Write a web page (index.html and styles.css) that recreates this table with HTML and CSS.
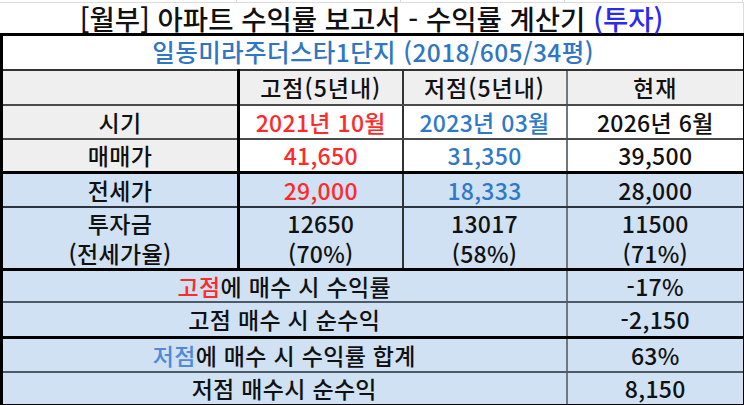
FILE: index.html
```html
<!DOCTYPE html>
<html lang="ko">
<head>
<meta charset="utf-8">
<title>수익률 계산기</title>
<link rel="stylesheet" href="styles.css">
</head>
<body>
<div class="sheet">
  <div class="strip">
    <div class="gc c1"></div><div class="gc c2"></div><div class="gc c3"></div><div class="gc c4"></div>
  </div>
  <div class="title">[월부] 아파트 수익률 보고서 - 수익률 계산기 <span class="t-blue">(투자)</span></div>
  <table class="report">
    <colgroup>
      <col class="w1"><col class="w2"><col class="w3"><col class="w4">
    </colgroup>
    <tr class="r-sub">
      <td colspan="4" class="sub">일동미라주더스타1단지 (2018/605/34평)</td>
    </tr>
    <tr class="r-head">
      <td class="grey vb"></td>
      <td class="grey v2 hd">고점(5년내)</td>
      <td class="grey v3 hd">저점(5년내)</td>
      <td class="grey hd">현재</td>
    </tr>
    <tr class="r-time">
      <td class="grey vb">시기</td>
      <td class="v2 red">2021년 10월</td>
      <td class="v3 blue">2023년 03월</td>
      <td>2026년 6월</td>
    </tr>
    <tr class="r-price">
      <td class="grey vb">매매가</td>
      <td class="v2 red">41,650</td>
      <td class="v3 blue">31,350</td>
      <td>39,500</td>
    </tr>
    <tr class="r-jeonse lb">
      <td class="vb">전세가</td>
      <td class="v2 red">29,000</td>
      <td class="v3 blue">18,333</td>
      <td>28,000</td>
    </tr>
    <tr class="r-invest lb">
      <td class="vb two">투자금<br>(전세가율)</td>
      <td class="v2 two">12650<br>(70%)</td>
      <td class="v3 two">13017<br>(58%)</td>
      <td class="two">11500<br>(71%)</td>
    </tr>
    <tr class="r-b1 lb">
      <td colspan="3" class="v3"><span class="red">고점</span>에 매수 시 수익률</td>
      <td>-17%</td>
    </tr>
    <tr class="r-b2 lb">
      <td colspan="3" class="v3">고점 매수 시 순수익</td>
      <td>-2,150</td>
    </tr>
    <tr class="r-b3 lb">
      <td colspan="3" class="v3"><span class="blue2">저점</span>에 매수 시 수익률 합계</td>
      <td>63%</td>
    </tr>
    <tr class="r-b4 lb">
      <td colspan="3" class="v3">저점 매수시 순수익</td>
      <td>8,150</td>
    </tr>
  </table>
</div>
</body>
</html>
```
FILE: styles.css
```css
* { box-sizing: border-box; }
html, body { margin: 0; padding: 0; background: #fff; }
body {
  font-family: "Noto Sans CJK KR", "Noto Sans", sans-serif;
  font-weight: 500;
  color: #111;
  width: 744px;
  height: 405px;
  overflow: hidden;
}
.sheet { width: 744px; }
.strip {
  display: flex;
  height: 3px;
  border-bottom: 1px solid #dcdcdc;
}
.gc { height: 3px; border-right: 1px solid #dcdcdc; }
.c1 { width: 237px; }
.c2 { width: 164px; }
.c3 { width: 164px; }
.c4 { width: 178px; }
.title {
  height: 30px;
  line-height: 30px;
  text-align: center;
  font-size: 27.5px;
  border-right: 1px solid #dcdcdc;
  white-space: nowrap;
}
.t-blue { color: #2b2bf0; }
.report {
  border-collapse: collapse;
  table-layout: fixed;
  width: 743px;
  border: 3px solid #000;
  font-size: 23px;
  letter-spacing: 0.3px;
}
.w1 { width: 237px; }
.w2 { width: 164px; }
.w3 { width: 164px; }
.w4 { width: 178px; }
.report td {
  padding: 0;
  text-align: center;
  vertical-align: middle;
  white-space: nowrap;
  border-bottom: 2px solid #4a4a4a;
  line-height: 30px;
}
.r-sub td { height: 35px; border-bottom: 2px solid #333; }
.report .sub { color: #2f76c4; font-size: 24.5px; letter-spacing: 0.4px; }
.hd { letter-spacing: 1px; }
.r-head td { height: 35px; }
.r-time td { height: 34px; }
.r-price td { height: 34px; border-bottom: 3px solid #000; }
.r-jeonse td { height: 34px; border-bottom: 2px solid #2c3440; }
.r-invest td { height: 60px; border-bottom: 3px solid #000; }
.two { line-height: 31px; }
.r-b1 td { height: 33px; border-bottom: 2px solid #4d5a6a; }
.r-b2 td { height: 35px; border-bottom: 3px solid #000; }
.r-b3 td { height: 35px; border-bottom: 2px solid #4d5a6a; }
.r-b4 td { height: 33px; border-bottom: none; }
.grey { background: #efefef; }
.lb td { background: #cfe1f3; }
.vb { border-right: 3px solid #000; }
.v2 { border-right: 2px solid #333; }
.v3 { border-right: 2px solid #6f7783; }
.red { color: #ff2a2a; }
.blue { color: #2f7ac8; }
.blue2 { color: #4f8ad8; }
```
